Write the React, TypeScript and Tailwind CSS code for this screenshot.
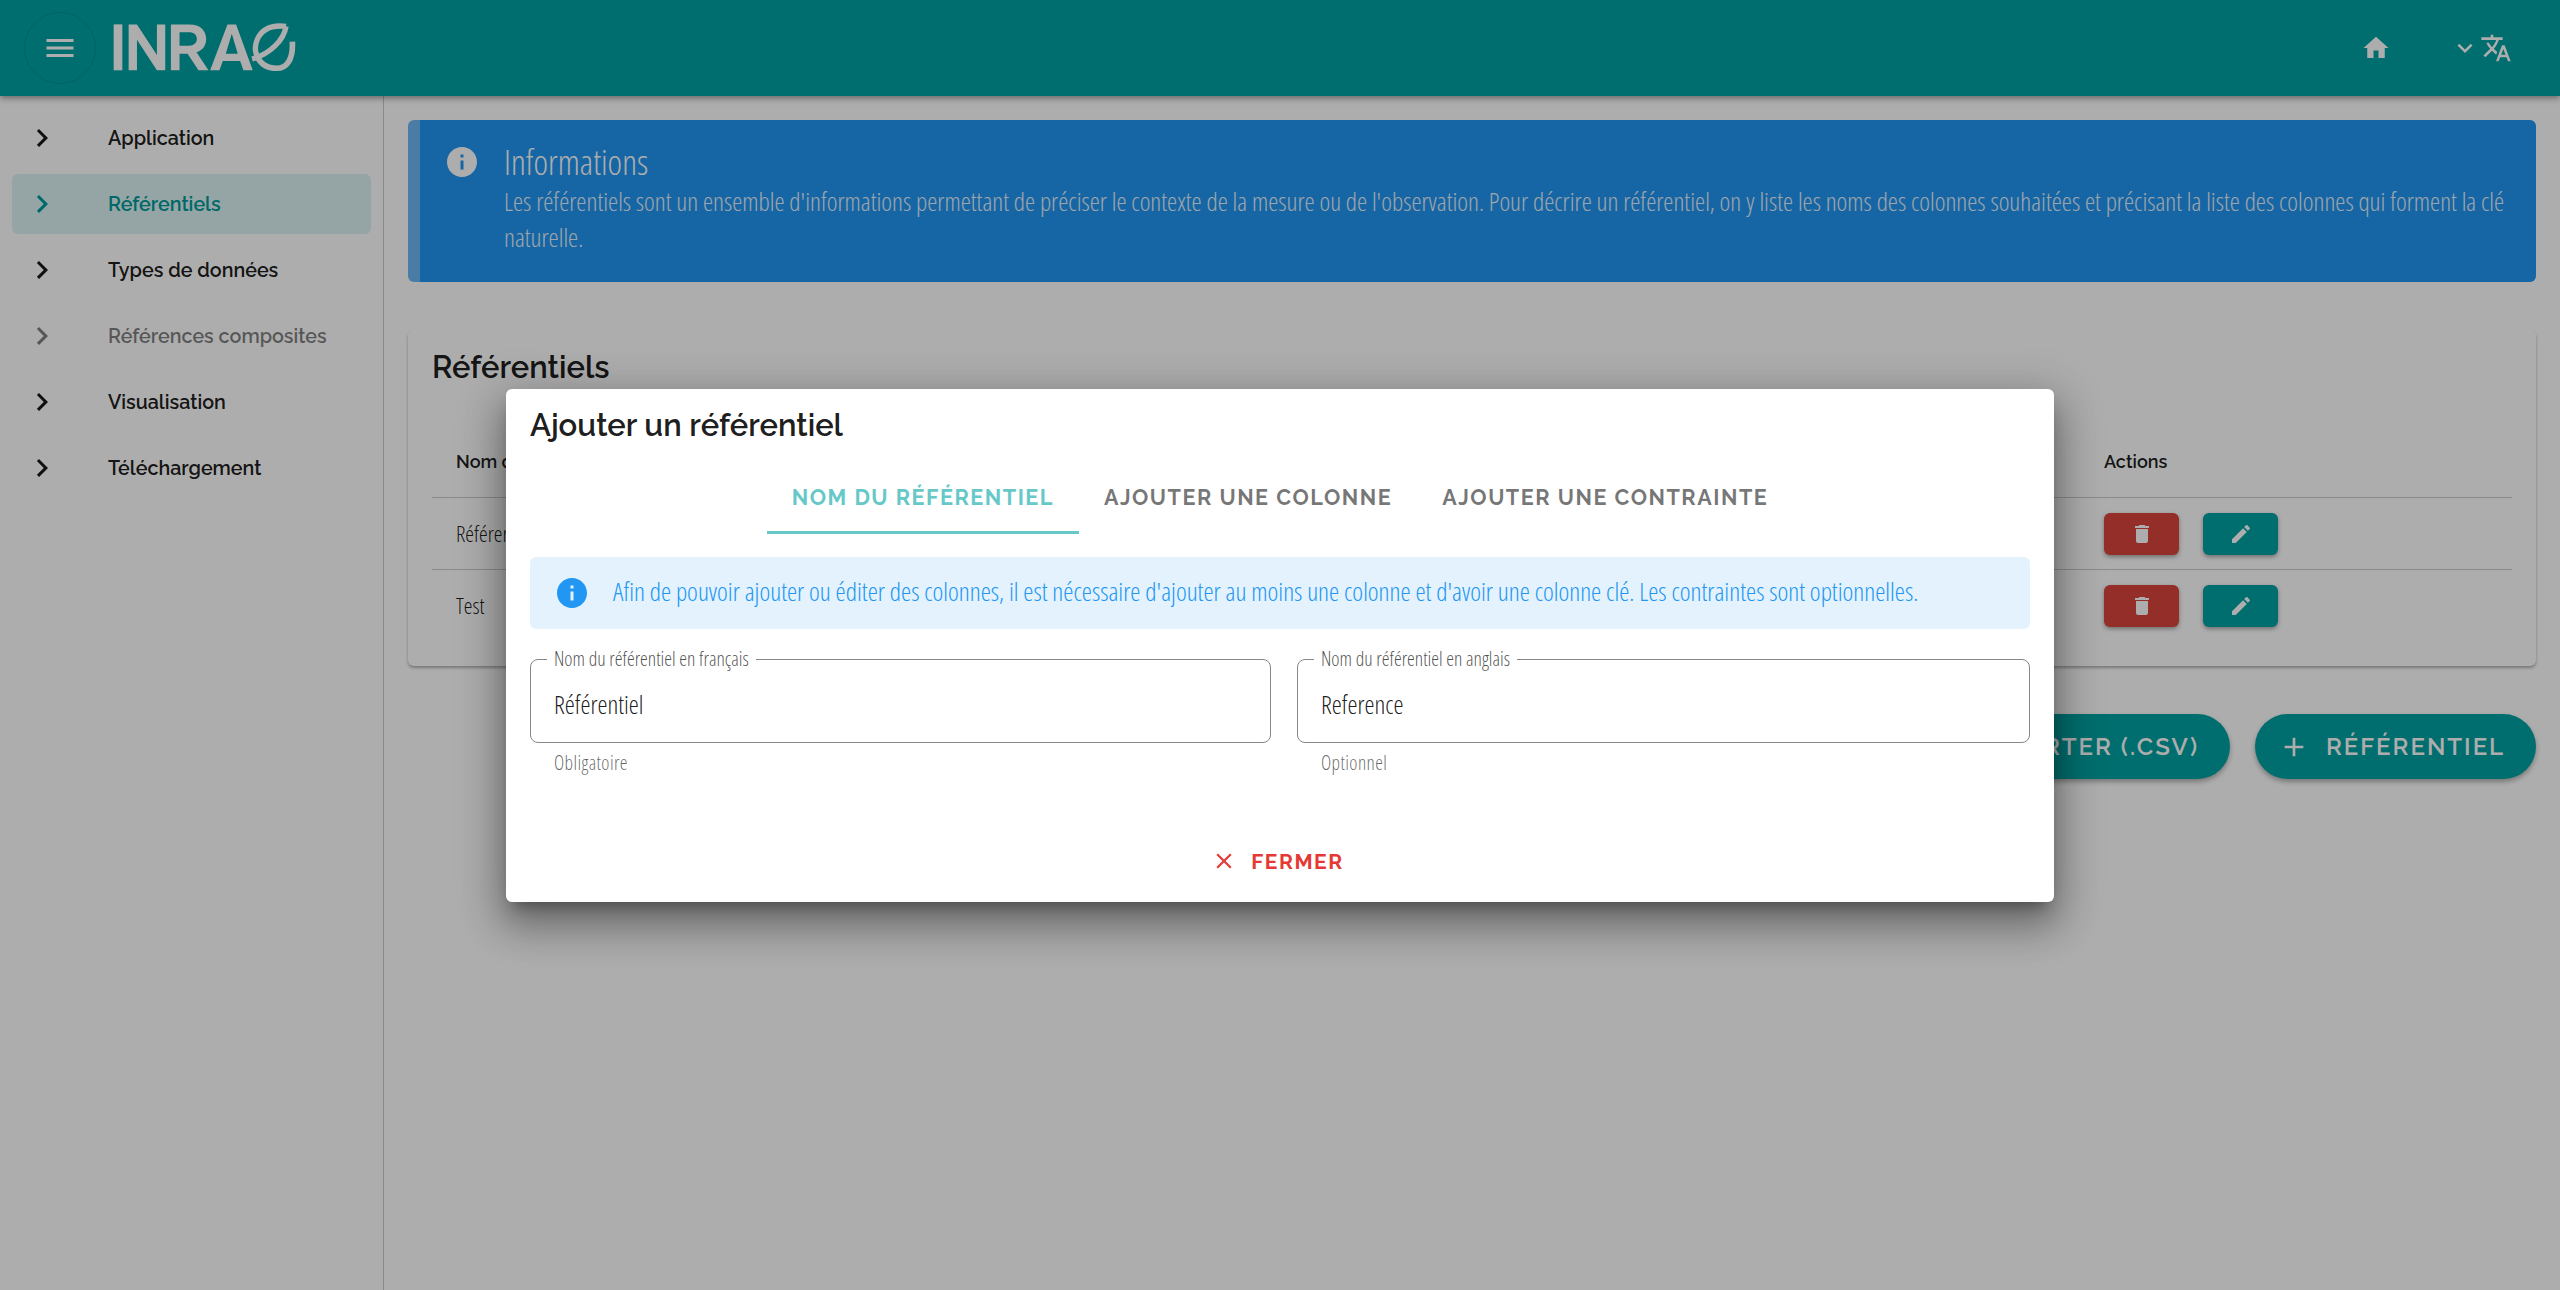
import { ReactNode } from 'react';

const Icon = ({ d, className }: { d: string; className?: string }) => (
  <svg viewBox="0 0 24 24" fill="currentColor" className={className}>
    <path d={d} />
  </svg>
);

const MENU = 'M3 18h18v-2H3v2zm0-5h18v-2H3v2zm0-7v2h18V6H3z';
const HOME = 'M10 20v-6h4v6h5v-8h3L12 3 2 12h3v8z';
const DOWN = 'M7.41 8.59L12 13.17l4.59-4.58L18 10l-6 6-6-6 1.41-1.41z';
const TRANSLATE =
  'M12.87 15.07l-2.54-2.51.03-.03c1.74-1.94 2.98-4.17 3.71-6.53H17V4h-7V2H8v2H1v1.99h11.17C11.5 7.92 10.44 9.75 9 11.35 8.07 10.32 7.3 9.19 6.69 8h-2c.73 1.63 1.73 3.17 2.98 4.56l-5.09 5.02L4 19l5-5 3.11 3.11.76-2.04zM18.5 10h-2L12 22h2l1.12-3h4.75L21 22h2l-4.5-12zm-2.62 7l1.62-4.33L19.12 17h-3.24z';
const RIGHT = 'M8.59 16.58L13.17 12 8.59 7.41 10 6l6 6-6 6-1.41-1.42z';
const INFO =
  'M12 2C6.48 2 2 6.48 2 12s4.48 10 10 10 10-4.48 10-10S17.52 2 12 2zm1 15h-2v-6h2v6zm0-8h-2V7h2v2z';
const TRASH = 'M6 19c0 1.1.9 2 2 2h8c1.1 0 2-.9 2-2V7H6v12zM19 4h-3.5l-1-1h-5l-1 1H5v2h14V4z';
const PENCIL =
  'M3 17.25V21h3.75L17.81 9.94l-3.75-3.75L3 17.25zM20.71 7.04c.39-.39.39-1.02 0-1.41l-2.34-2.34c-.39-.39-1.02-.39-1.41 0l-1.83 1.83 3.75 3.75 1.83-1.83z';
const PLUS = 'M19 13h-6v6h-2v-6H5v-2h6V5h2v6h6v2z';
const CLOSE =
  'M19 6.41L17.59 5 12 10.59 6.41 5 5 6.41 10.59 12 5 17.59 6.41 19 12 13.41 17.59 19 19 17.59 13.41 12z';

// condensed body font used everywhere except titles and menus
const BODY = "font-['Open_Sans',sans-serif] font-stretch-condensed font-light";

const Logo = () => (
  <svg viewBox="250 40 550 150" className="h-[50px] w-[183px] text-white" fill="currentColor">
    <rect x="252" y="44" width="26" height="138" />
    <path d="M297 44h25l60 92V44h25v138h-25l-60-92v92h-25z" />
    <path d="M424 44h56c32 0 50 18 50 44 0 20-11 34-29 40l36 54h-30l-33-50h-24v50h-26zm26 24v40h28c15 0 24-8 24-20s-9-20-24-20z" />
    <path d="M594 44h26l50 138h-28l-10-28h-52l-10 28h-28zm13 28l-18 60h36z" />
    <path
      d="M770 50C738 46 702 50 684 88c-10 24-8 44 6 60M770 50c-6 42-50 84-102 98"
      fill="none"
      stroke="currentColor"
      strokeWidth="16"
    />
    <path
      d="M680 134c14 34 40 42 62 42 30 0 50-26 47-80"
      fill="none"
      stroke="currentColor"
      strokeWidth="17"
    />
  </svg>
);

const NAV = [
  { label: 'Application' },
  { label: 'Référentiels', active: true },
  { label: 'Types de données' },
  { label: 'Références composites', disabled: true },
  { label: 'Visualisation' },
  { label: 'Téléchargement' },
];

const NavItem = ({ label, active, disabled }: { label: string; active?: boolean; disabled?: boolean }) => (
  <div
    className={`flex h-[60px] items-center rounded-[6px] pl-[12px] text-[19.7px] font-semibold ${
      active ? 'bg-[#dcf3f3] text-[#009a9a]' : disabled ? 'text-black/50' : 'text-black/90'
    }`}
  >
    <Icon d={RIGHT} className="h-[36px] w-[36px]" />
    <span className="ml-[48px] pt-[1px]">{label}</span>
  </div>
);

const RowActions = () => (
  <div className="flex gap-[24px]">
    <button className="flex h-[42px] w-[75px] items-center justify-center rounded-[6px] bg-[#da453b] text-white shadow-[0_2px_4px_rgba(0,0,0,0.35)]">
      <Icon d={TRASH} className="h-[24px] w-[24px]" />
    </button>
    <button className="flex h-[42px] w-[75px] items-center justify-center rounded-[6px] bg-[#00a2a2] text-white shadow-[0_2px_4px_rgba(0,0,0,0.35)]">
      <Icon d={PENCIL} className="h-[24px] w-[24px]" />
    </button>
  </div>
);

const Row = ({ children }: { children: ReactNode }) => (
  <div className="flex h-[72px] items-center border-t border-black/20 pl-[24px] pr-[24px]">
    <span className={`w-[1648px] text-[22px] text-black/90 ${BODY}`}>{children}</span>
    <RowActions />
  </div>
);

const PillButton = ({ icon, children, className }: { icon?: string; children: ReactNode; className?: string }) => (
  <button
    className={`flex h-[65px] items-center justify-center rounded-full bg-[#00a2a2] text-[24px] font-semibold tracking-[2px] text-white shadow-[0_3px_5px_rgba(0,0,0,0.3)] ${className}`}
  >
    {icon && <Icon d={icon} className="mr-[16px] h-[32px] w-[32px]" />}
    {children}
  </button>
);

const Field = ({ label, value, help, className }: { label: string; value: string; help: string; className: string }) => (
  <div className={className}>
    <div className="relative flex h-[84px] items-center rounded-[8px] border border-[#888888] pl-[23px] pt-[8px] text-[25.3px] text-black/90">
      <span className="absolute -top-[12px] left-[16px] bg-white px-[7px] text-[19.6px] leading-[22px] text-black/70">
        {label}
      </span>
      {value}
    </div>
    <div className="mt-[9px] pl-[24px] text-[19.4px] leading-[22px] tracking-[0.4px] text-black/60">{help}</div>
  </div>
);

const Tab = ({ label, active }: { label: string; active?: boolean }) => (
  <div
    className={`flex h-[72px] items-center border-b-[3px] px-[25px] pt-[4px] text-[21.6px] font-bold tracking-[1.5px] ${
      active ? 'border-[#66c8c8] text-[#66c8c8]' : 'border-transparent text-black/55'
    }`}
  >
    {label}
  </div>
);

export default function App() {
  return (
    <div className="relative flex h-screen flex-col overflow-hidden bg-white font-['Raleway','Inter',sans-serif]">
      <header className="z-10 flex h-[96px] shrink-0 items-center bg-[#00a2a2] pl-[24px] pr-[48px] text-white shadow-[0_2px_4px_-1px_rgba(0,0,0,0.2),0_4px_5px_rgba(0,0,0,0.14),0_1px_10px_rgba(0,0,0,0.12)]">
        <div className="flex h-[72px] w-[72px] items-center justify-center rounded-full border border-black/10">
          <Icon d={MENU} className="h-[36px] w-[36px]" />
        </div>
        <div className="ml-[17px]">
          <Logo />
        </div>
        <div className="ml-auto flex items-center">
          <Icon d={HOME} className="mr-[59px] h-[30px] w-[30px]" />
          <Icon d={DOWN} className="h-[30px] w-[30px]" />
          <Icon d={TRANSLATE} className="h-[32px] w-[32px]" />
        </div>
      </header>

      <div className="flex min-h-0 flex-1">
        <aside className="flex w-[384px] shrink-0 flex-col gap-[6px] border-r border-black/20 px-[12px] pt-[12px]">
          {NAV.map((item) => (
            <NavItem key={item.label} {...item} />
          ))}
        </aside>

        <main className="flex-1 px-[24px] pt-[24px]">
          <div className={`flex h-[162px] rounded-[6px] border-l-[12px] border-[#6fb7f3] bg-[#2196f3] pl-[24px] pr-[20px] pt-[22px] text-white ${BODY}`}>
            <Icon d={INFO} className="mt-[2px] h-[36px] w-[36px] shrink-0" />
            <div className="ml-[24px]">
              <div className="text-[34.7px] leading-[40px]">Informations</div>
              <p className="mt-[2px] text-[25.6px] leading-[36px] opacity-90">
                Les référentiels sont un ensemble d'informations permettant de préciser le contexte de la mesure ou de
                l'observation. Pour décrire un référentiel, on y liste les noms des colonnes souhaitées et précisant la
                liste des colonnes qui forment la clé naturelle.
              </p>
            </div>
          </div>

          <section className="mt-[48px] h-[336px] rounded-[6px] bg-white px-[24px] pt-[18px] shadow-[0_2px_3px_rgba(0,0,0,0.3)]">
            <h2 className="text-[31px] font-semibold leading-[38px] text-black/90">Référentiels</h2>
            <div className="mt-[40px] flex h-[71px] items-center pl-[24px] text-[18px] font-semibold text-black/90">
              <span className="w-[1648px]">Nom du référentiel</span>
              <span>Actions</span>
            </div>
            <Row>Référentiel</Row>
            <Row>Test</Row>
          </section>

          <div className="mt-[48px] flex justify-end gap-[25px]">
            <PillButton className="px-[31px]">IMPORTER (.CSV)</PillButton>
            <PillButton icon={PLUS} className="w-[281px] pr-[8px]">
              RÉFÉRENTIEL
            </PillButton>
          </div>
        </main>
      </div>

      <div className="absolute inset-0 z-20 flex items-center justify-center bg-black/32">
        <div className="h-[513px] w-[1548px] rounded-[6px] bg-white px-[24px] pt-[18px] shadow-[0_11px_15px_-7px_rgba(0,0,0,0.35),0_24px_38px_3px_rgba(0,0,0,0.25),0_9px_46px_8px_rgba(0,0,0,0.18)]">
          <h2 className="text-[31px] font-semibold leading-[36px] text-black/90">Ajouter un référentiel</h2>
          <div className="mt-[19px] flex justify-center">
            <Tab label="NOM DU RÉFÉRENTIEL" active />
            <Tab label="AJOUTER UNE COLONNE" />
            <Tab label="AJOUTER UNE CONTRAINTE" />
          </div>
          <div className={`mt-[23px] flex h-[72px] items-center rounded-[6px] bg-[#e3f2fd] pl-[24px] text-[25.7px] text-[#2196f3] ${BODY}`}>
            <Icon d={INFO} className="h-[36px] w-[36px] shrink-0" />
            <span className="ml-[23px]">
              Afin de pouvoir ajouter ou éditer des colonnes, il est nécessaire d'ajouter au moins une colonne et d'avoir
              une colonne clé. Les contraintes sont optionnelles.
            </span>
          </div>
          <div className={`mt-[30px] flex justify-between ${BODY}`}>
            <Field
              className="w-[741px]"
              label="Nom du référentiel en français"
              value="Référentiel"
              help="Obligatoire"
            />
            <Field className="w-[733px]" label="Nom du référentiel en anglais" value="Reference" help="Optionnel" />
          </div>
          <div className="mt-[72px] flex justify-center">
            <button className="flex items-center pr-[5px] text-[21px] font-bold tracking-[1.5px] text-[#e53935]">
              <Icon d={CLOSE} className="mr-[14px] h-[26px] w-[26px]" />
              FERMER
            </button>
          </div>
        </div>
      </div>
    </div>
  );
}
